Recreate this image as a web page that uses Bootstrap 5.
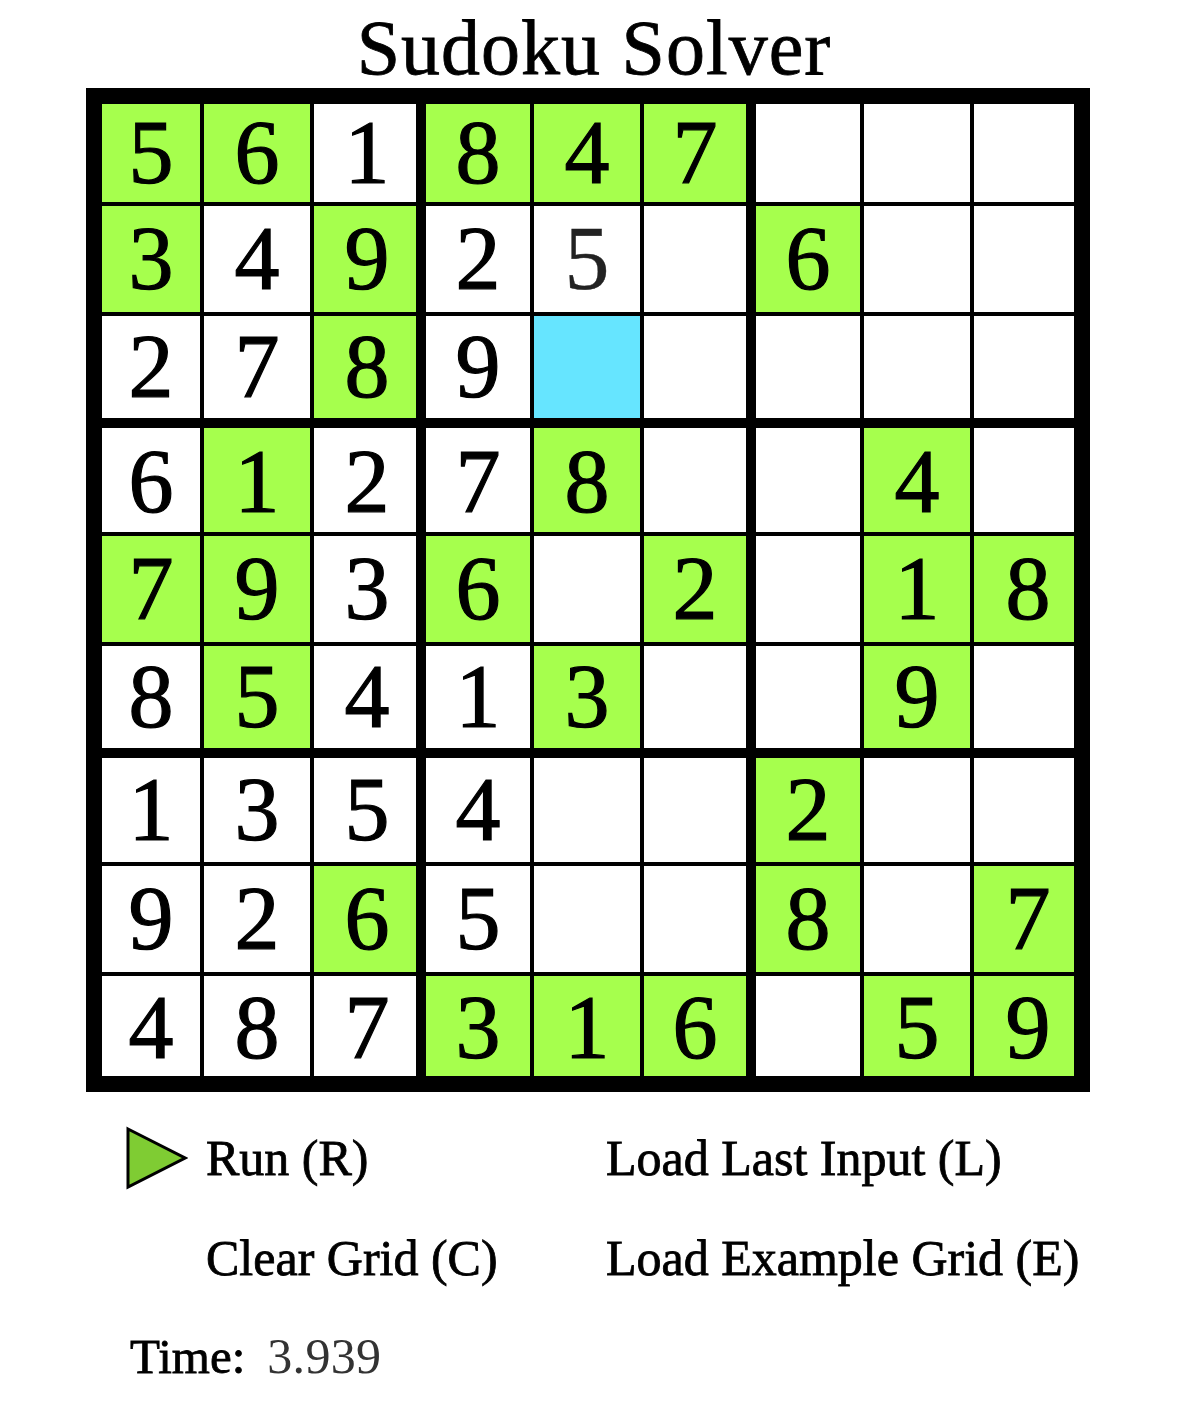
<!doctype html>
<html lang="en">
<head>
<meta charset="utf-8">
<title>Sudoku Solver</title>
<link href="https://cdn.jsdelivr.net/npm/bootstrap@5.3.0/dist/css/bootstrap.min.css" rel="stylesheet">
<style>
html,body{background:#fff;color:#000;font-family:"Liberation Serif",serif;overflow:hidden}
.solver{width:1178px;height:1404px}
.heading{height:88px;font-family:inherit;font-size:78px;font-weight:400;line-height:96px;letter-spacing:1px;margin:0;-webkit-text-stroke:.8px #000;padding-left:10px}
.sudoku{display:grid;width:1004px;height:1004px;margin-left:86px;border:16px solid #000;background:#fff;
grid-template-columns:102px 110px 112px 108px 110px 112px 108px 110px 100px;
grid-template-rows:102px 110px 112px 108px 110px 112px 108px 110px 100px}
.sq{display:flex;align-items:center;justify-content:center;font-size:90px;line-height:1;border-right:4px solid #000;border-bottom:4px solid #000;-webkit-text-stroke:1.2px #000}
.sudoku>.sq:nth-child(3n){border-right-width:10px}
.sudoku>.sq:nth-child(9n){border-right-width:0;padding-left:8px}
.sudoku>.sq:nth-child(9n+3){padding-left:4px}
.sudoku>.sq:nth-child(n+19):nth-child(-n+27),.sudoku>.sq:nth-child(n+46):nth-child(-n+54){border-bottom-width:10px}
.sudoku>.sq:nth-child(n+28):nth-child(-n+36){padding-top:4px}
.sudoku>.sq:nth-child(n+73){border-bottom-width:0;padding-top:4px}
.solved{background:#a6ff4d}
.current{background:#66e5ff}
.sudoku>.soft{-webkit-text-stroke:.4px #222;color:#222}
.controls{display:grid;grid-template-columns:80px 400px auto;grid-auto-rows:100px;margin:16px 0 0 126px;font-size:50px;-webkit-text-stroke:.8px #000}
.controls>div{display:flex;align-items:center}
.timeline{margin:0 0 0 130px;font-size:49px;line-height:96px}
.timeline b{font-weight:400;-webkit-text-stroke:.8px #000}
.timeline span{color:#333;margin-left:22px;font-size:50px;letter-spacing:.3px}
</style>
</head>
<body>
<main class="solver">
<h1 class="heading text-center">Sudoku Solver</h1>
<div class="sudoku">
<div class="sq solved">5</div><div class="sq solved">6</div><div class="sq">1</div><div class="sq solved">8</div><div class="sq solved">4</div><div class="sq solved">7</div><div class="sq"></div><div class="sq"></div><div class="sq"></div>
<div class="sq solved">3</div><div class="sq">4</div><div class="sq solved">9</div><div class="sq">2</div><div class="sq soft">5</div><div class="sq"></div><div class="sq solved">6</div><div class="sq"></div><div class="sq"></div>
<div class="sq">2</div><div class="sq">7</div><div class="sq solved">8</div><div class="sq">9</div><div class="sq current"></div><div class="sq"></div><div class="sq"></div><div class="sq"></div><div class="sq"></div>
<div class="sq">6</div><div class="sq solved">1</div><div class="sq">2</div><div class="sq">7</div><div class="sq solved">8</div><div class="sq"></div><div class="sq"></div><div class="sq solved">4</div><div class="sq"></div>
<div class="sq solved">7</div><div class="sq solved">9</div><div class="sq">3</div><div class="sq solved">6</div><div class="sq"></div><div class="sq solved">2</div><div class="sq"></div><div class="sq solved">1</div><div class="sq solved">8</div>
<div class="sq">8</div><div class="sq solved">5</div><div class="sq">4</div><div class="sq">1</div><div class="sq solved">3</div><div class="sq"></div><div class="sq"></div><div class="sq solved">9</div><div class="sq"></div>
<div class="sq">1</div><div class="sq">3</div><div class="sq">5</div><div class="sq">4</div><div class="sq"></div><div class="sq"></div><div class="sq solved">2</div><div class="sq"></div><div class="sq"></div>
<div class="sq">9</div><div class="sq">2</div><div class="sq solved">6</div><div class="sq">5</div><div class="sq"></div><div class="sq"></div><div class="sq solved">8</div><div class="sq"></div><div class="sq solved">7</div>
<div class="sq">4</div><div class="sq">8</div><div class="sq">7</div><div class="sq solved">3</div><div class="sq solved">1</div><div class="sq solved">6</div><div class="sq"></div><div class="sq solved">5</div><div class="sq solved">9</div>
</div>
<div class="controls">
<div><svg width="62" height="64" viewBox="0 0 62 64"><polygon points="2,3 59,32 2,61" fill="#7fcc33" stroke="#000" stroke-width="3"/></svg></div>
<div>Run (R)</div>
<div>Load Last Input (L)</div>
<div></div>
<div>Clear Grid (C)</div>
<div>Load Example Grid (E)</div>
</div>
<div class="timeline"><b>Time:</b><span>3.939</span></div>
</main>
<script src="https://cdn.jsdelivr.net/npm/bootstrap@5.3.0/dist/js/bootstrap.bundle.min.js"></script>
</body>
</html>
